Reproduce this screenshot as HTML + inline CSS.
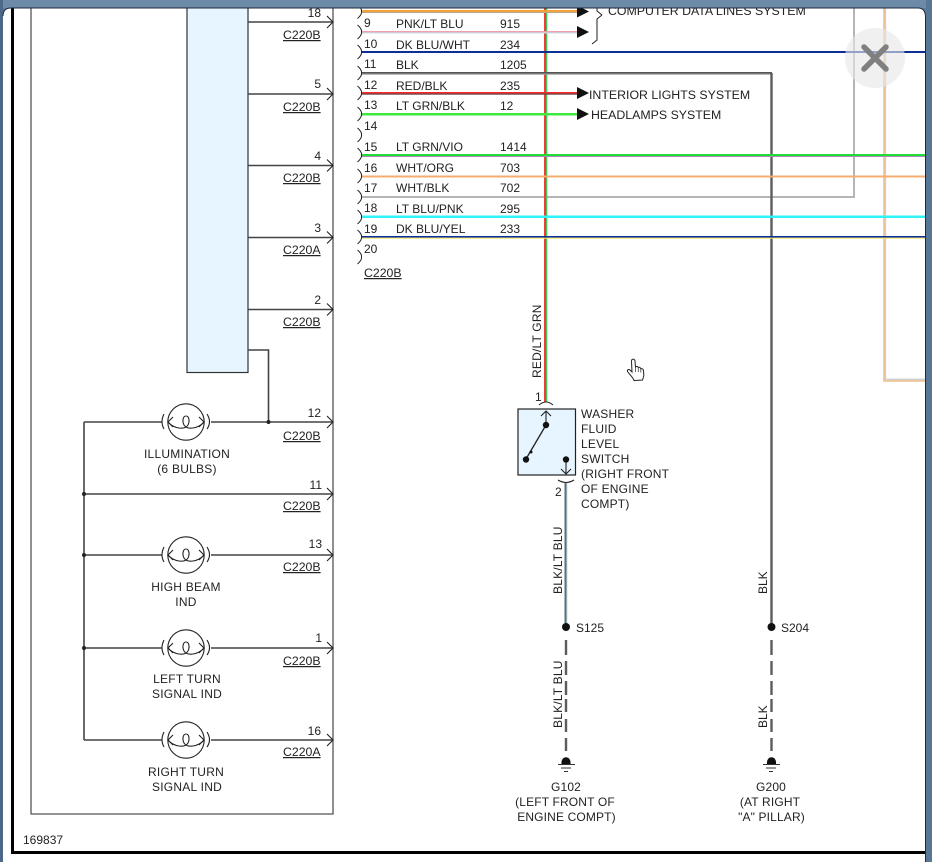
<!DOCTYPE html>
<html>
<head>
<meta charset="utf-8">
<style>
html,body{margin:0;padding:0;width:932px;height:862px;overflow:hidden;background:#5f7b9b}
svg{display:block;position:absolute;left:0;top:0}
text{font-family:"Liberation Sans",sans-serif;font-size:12px;fill:#222}
.c{text-anchor:middle}
.e{text-anchor:end}
.u{text-decoration:underline;font-size:12.3px}
.s{font-size:12.35px}
</style>
</head>
<body>
<svg width="932" height="862" viewBox="0 0 932 862">
<defs>
<clipPath id="pan"><path d="M3 862V16Q3 8 11 8H918Q925 8 925 16V862Z"/></clipPath>
<g id="bulb" fill="none" stroke="#222" stroke-width="1.1">
<circle cx="0" cy="0" r="18.2"/>
<path d="M-22 -8Q-26 0 -22 7M21 -8Q26 0 21 7"/>
<path d="M-18 0C-12 7 -1 8 2 3C4 -1 3 -6 0 -6C-3 -6 -4 -1 -2 3C1 8 12 7 18 0"/>
<path d="M-13 -5L-18 0L-13 5M13 -5L18 0L13 5"/>
</g>
<path id="chev" d="M-6 -6L0 0L-6 6" fill="none" stroke="#222" stroke-width="1.1"/>
<path id="brk" d="M-3.500 -7C-1 -5 1 -2 .5 0C1 2 -1 5 -3.500 7" fill="none" stroke="#222" stroke-width="1"/>
</defs>

<!-- window background -->
<rect width="932" height="8" fill="#6d8aa9"/>
<rect x="0" y="0" width="3" height="862" fill="#4d6889"/>
<rect x="926" y="0" width="6" height="862" fill="#5a7697"/>
<path d="M3 862V16Q3 8 11 8H918Q925 8 925 16V862Z" fill="#fff"/>

<g clip-path="url(#pan)">
<!-- outer black frame -->
<path d="M12.500 8V852.500H926" fill="none" stroke="#000" stroke-width="3"/>

<!-- module -->
<path d="M31 8V814H333V8" fill="none" stroke="#555" stroke-width="1.3"/>
<rect x="187" y="4" width="61" height="368.500" fill="#e6f5ff" stroke="#333" stroke-width="1.2"/>

<g fill="none" stroke="#444" stroke-width="1.6">
<path d="M248 22H333M248 94H333M248 165.500H333M248 237.500H333M248 309.500H333"/>
<path d="M248 350H268.500V422"/>
<path d="M84 422V740"/>
<path d="M84 422H162M211 422H333"/>
<path d="M84 494H333"/>
<path d="M84 555H162M211 555H333"/>
<path d="M84 648H162M211 648H333"/>
<path d="M84 740H162M211 740H333"/>
</g>
<use href="#chev" x="333" y="22"/><use href="#chev" x="333" y="94"/><use href="#chev" x="333" y="165.500"/>
<use href="#chev" x="333" y="237.500"/><use href="#chev" x="333" y="309.500"/><use href="#chev" x="333" y="422"/>
<use href="#chev" x="333" y="494"/><use href="#chev" x="333" y="555"/><use href="#chev" x="333" y="648"/><use href="#chev" x="333" y="740"/>
<use href="#bulb" x="186" y="422"/><use href="#bulb" x="186" y="555"/><use href="#bulb" x="186" y="648"/><use href="#bulb" x="186" y="740"/>
<circle cx="268.500" cy="422" r="2" fill="#222"/>
<circle cx="84" cy="494" r="2" fill="#222"/><circle cx="84" cy="555" r="2" fill="#222"/><circle cx="84" cy="648" r="2" fill="#222"/>

<g>
<text class="e" x="321" y="17">18</text><text class="u" x="283" y="39">C220B</text>
<text class="e" x="321" y="88">5</text><text class="u" x="283" y="111">C220B</text>
<text class="e" x="321" y="160">4</text><text class="u" x="283" y="182">C220B</text>
<text class="e" x="321" y="232">3</text><text class="u" x="283" y="254">C220A</text>
<text class="e" x="321" y="304">2</text><text class="u" x="283" y="326">C220B</text>
<text class="e" x="321" y="417">12</text><text class="u" x="283" y="440">C220B</text>
<text class="e" x="322" y="489">11</text><text class="u" x="283" y="510">C220B</text>
<text class="e" x="322" y="548">13</text><text class="u" x="283" y="571">C220B</text>
<text class="e" x="322" y="642">1</text><text class="u" x="283" y="665">C220B</text>
<text class="e" x="321" y="735">16</text><text class="u" x="283" y="756">C220A</text>
</g>

<g style="letter-spacing:.25px">
<text class="c" x="187" y="458">ILLUMINATION</text><text class="c" x="187" y="473">(6 BULBS)</text>
<text class="c" x="186" y="591">HIGH BEAM</text><text class="c" x="186" y="606">IND</text>
<text class="c" x="187" y="683">LEFT TURN</text><text class="c" x="187" y="698">SIGNAL IND</text>
<text class="c" x="186" y="776">RIGHT TURN</text><text class="c" x="187" y="791">SIGNAL IND</text>
</g>
<text x="23" y="844">169837</text>

<!-- far right loops -->
<path d="M854 8V197H361" fill="none" stroke="#b5b5b5" stroke-width="2"/>
<path d="M885.300 8V379.500H926" fill="none" stroke="#cfcfcf" stroke-width="1.800"/>
<path d="M884 8V381H926" fill="none" stroke="#f0c08e" stroke-width="1.600"/>

<!-- vertical red / green wire -->
<rect x="544" y="8" width="2" height="394" fill="#f23b3b"/>
<rect x="546" y="8" width="1.300" height="394" fill="#46c455"/>

<!-- horizontal wires -->
<rect x="361" y="10" width="216" height="2" fill="#f5a13a"/><rect x="361" y="12" width="216" height="1" fill="#b9a88e"/>
<rect x="361" y="31" width="216" height="1.500" fill="#f0a0b0"/><rect x="361" y="32.500" width="216" height="1" fill="#bfe8ef"/>
<rect x="361" y="51" width="565" height="2" fill="#0b2f94"/>
<rect x="361" y="72" width="411" height="1.500" fill="#555"/><rect x="361" y="73.500" width="411" height="1.200" fill="#9a9a9a"/>
<path d="M771.500 73V627" fill="none" stroke="#5c5c5c" stroke-width="2.400"/>
<rect x="361" y="92" width="216" height="1.500" fill="#f52a2a"/><rect x="361" y="93.500" width="216" height="1.200" fill="#6a4444"/>
<rect x="361" y="113" width="216" height="2.500" fill="#3fe83f"/>
<rect x="361" y="154" width="565" height="2" fill="#22dd33"/><rect x="361" y="156" width="565" height="1" fill="#a98ab9"/>
<rect x="361" y="175.500" width="565" height="2" fill="#f7ac6d"/>
<rect x="361" y="215.500" width="565" height="2.500" fill="#2ff3f8"/>
<rect x="361" y="236" width="565" height="1.700" fill="#0b2f94"/><rect x="361" y="237.700" width="565" height="1" fill="#f7e95d"/>

<!-- arrows -->
<g fill="#111">
<path d="M577 5.500L589 11.500L577 17.500Z"/>
<path d="M577 26L589 32L577 38Z"/>
<path d="M577 87L589 93L577 99Z"/>
<path d="M577 108L589 114L577 120Z"/>
</g>
<path d="M592 44L597 40V19L602 15M602 15L597 11V8" fill="none" stroke="#222" stroke-width="1"/>

<!-- connector brackets -->
<g>
<use href="#brk" x="361" y="11.500"/><use href="#brk" x="361" y="32"/><use href="#brk" x="361" y="52"/>
<use href="#brk" x="361" y="73"/><use href="#brk" x="361" y="93"/><use href="#brk" x="361" y="114"/>
<use href="#brk" x="361" y="135"/><use href="#brk" x="361" y="155"/><use href="#brk" x="361" y="176"/>
<use href="#brk" x="361" y="197"/><use href="#brk" x="361" y="217"/><use href="#brk" x="361" y="237"/>
<use href="#brk" x="361" y="257"/>
</g>

<g>
<text x="364" y="27">9</text><text x="396" y="28">PNK/LT BLU</text><text x="500" y="28">915</text>
<text x="364" y="48">10</text><text x="396" y="49">DK BLU/WHT</text><text x="500" y="49">234</text>
<text x="364" y="68">11</text><text x="396" y="69">BLK</text><text x="500" y="69">1205</text>
<text x="364" y="89">12</text><text x="396" y="90">RED/BLK</text><text x="500" y="90">235</text>
<text x="364" y="109">13</text><text x="396" y="110">LT GRN/BLK</text><text x="500" y="110">12</text>
<text x="364" y="130">14</text>
<text x="364" y="151">15</text><text x="396" y="151">LT GRN/VIO</text><text x="500" y="151">1414</text>
<text x="364" y="172">16</text><text x="396" y="172">WHT/ORG</text><text x="500" y="172">703</text>
<text x="364" y="192">17</text><text x="396" y="192">WHT/BLK</text><text x="500" y="192">702</text>
<text x="364" y="212">18</text><text x="396" y="213">LT BLU/PNK</text><text x="500" y="213">295</text>
<text x="364" y="233">19</text><text x="396" y="233">DK BLU/YEL</text><text x="500" y="233">233</text>
<text x="364" y="253">20</text>
<text class="u" x="364" y="277">C220B</text>
</g>

<text class="s" x="589" y="99">INTERIOR LIGHTS SYSTEM</text>
<text class="s" x="591" y="119">HEADLAMPS SYSTEM</text>
<text class="s" x="608" y="15">COMPUTER DATA LINES SYSTEM</text>

<!-- switch -->
<text transform="translate(541 378) rotate(-90)" style="letter-spacing:.2px">RED/LT GRN</text>
<text x="535" y="401">1</text>
<path d="M539 405Q546 399 553 405" fill="none" stroke="#222" stroke-width="1"/>
<rect x="518" y="409" width="57.500" height="66" fill="#e6f5ff" stroke="#222" stroke-width="1.200"/>
<g fill="none" stroke="#222" stroke-width="1.100">
<path d="M546 411V425M541 416L546 411L551 416"/>
<path d="M546 425L526 459" stroke-width="1.300"/>
<path d="M566 459V474M561 469L566 474L571 469"/>
<path d="M558 480Q566 485 574 480"/>
</g>
<circle cx="546" cy="425" r="3.200" fill="#111"/><circle cx="526" cy="459.500" r="3.200" fill="#111"/><circle cx="566" cy="459.500" r="3.200" fill="#111"/>
<circle cx="531" cy="452" r="1.500" fill="#111"/>
<text x="555" y="496">2</text>
<path d="M565.500 483V627" stroke="#5f6f75" stroke-width="2" fill="none"/>
<path d="M567 483V627" stroke="#a6e2f0" stroke-width=".8" fill="none"/>
<g style="letter-spacing:.2px">
<text x="581" y="418">WASHER</text><text x="581" y="433">FLUID</text><text x="581" y="448">LEVEL</text>
<text x="581" y="463">SWITCH</text><text x="581" y="478">(RIGHT FRONT</text><text x="581" y="493">OF ENGINE</text><text x="581" y="508">COMPT)</text>
</g>

<!-- lower wires -->
<text transform="translate(562 594) rotate(-90)" style="letter-spacing:.2px">BLK/LT BLU</text>
<text transform="translate(767 594) rotate(-90)">BLK</text>
<circle cx="566" cy="627" r="4" fill="#111"/><circle cx="771.500" cy="627" r="4" fill="#111"/>
<text x="576" y="632">S125</text><text x="781" y="632">S204</text>
<g stroke="#5c5c5c" stroke-width="2.400" fill="none">
<path d="M566 640V655M566 661V675M566 681V695M566 699V712M566 719V732M566 738V751"/>
<path d="M771.500 640V655M771.500 661V675M771.500 681V695M771.500 699V712M771.500 719V732M771.500 738V751"/>
</g>
<text transform="translate(562 728) rotate(-90)" style="letter-spacing:.2px">BLK/LT BLU</text>
<text transform="translate(767 728) rotate(-90)">BLK</text>

<!-- grounds -->
<g fill="#111">
<path d="M561.500 764C560.500 755 571.500 755 570.500 764Z"/>
<path d="M767 764C766 755 777 755 776 764Z"/>
</g>
<g stroke="#333" stroke-width="1" fill="none">
<path d="M558 764.500H575M561 768H571M564 771.500H568"/>
<path d="M763 764.500H780M766 768H776M769 771.500H773"/>
</g>
<g style="letter-spacing:.15px">
<text class="c" x="566" y="791">G102</text>
<text class="c" x="565" y="806">(LEFT FRONT OF</text>
<text class="c" x="566.500" y="821">ENGINE COMPT)</text>
<text class="c" x="771" y="791">G200</text>
<text class="c" x="770" y="806">(AT RIGHT</text>
<text class="c" x="771.500" y="821">"A" PILLAR)</text>
</g>

<!-- hand cursor -->
<path d="M632 359.500C633.500 358.500 634.800 359.500 635 361L635.500 367C636.500 366 638 366.500 638.300 367.500C639.200 367 640.500 367.500 640.800 368.700C641.800 368.300 643.300 369 643.500 370.500L643.800 375C643.800 377 643 378 642.500 380L634 380.500C633.500 378 630 375 627.500 371.500C627 369.500 628.800 369 630 370L632 372L631.500 361.500C631.500 360.500 631.700 360 632 359.500Z" fill="#fff" stroke="#222" stroke-width="1"/>
<path d="M635.500 367V372M638.300 367.500V372M640.800 368.700V372.500" stroke="#444" stroke-width=".8" fill="none"/>
</g>

<!-- panel edge -->
<path d="M3 16Q3 8 11 8H918Q925 8 925.500 16V862" fill="none" stroke="#1d2a3a" stroke-width="1"/>

<!-- close button -->
<circle cx="875" cy="58" r="30" fill="#e6e6e6" opacity=".62"/>
<path d="M864 47L886 69M886 47L864 69" stroke="#808080" stroke-width="5.500" stroke-linecap="round" fill="none"/>
</svg>
</body>
</html>
